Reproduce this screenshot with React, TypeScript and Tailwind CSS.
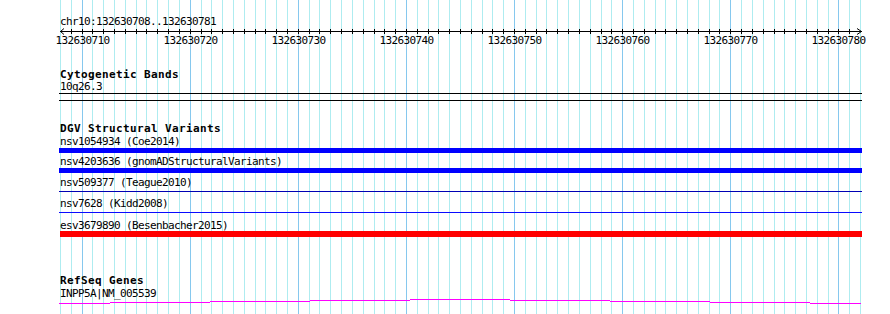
import React from 'react';

const START = 132630708;
const END = 132630781;
const LEFT = 60;
const RIGHT = 860;
const BP = END - START + 1;
const STEP = (RIGHT - LEFT) / BP;

const ticks = Array.from({ length: BP + 1 }, (_, i) => ({
  x: Math.round(LEFT + i * STEP),
  pos: START + i,
}));

const variants: { name: string; kind: 'bar' | 'line' | 'red'; color: string; gap: number }[] = [
  { name: 'nsv1054934 (Coe2014)', kind: 'bar', color: '#0000ff', gap: 2 },
  { name: 'nsv4203636 (gnomADStructuralVariants)', kind: 'bar', color: '#0000ff', gap: 3 },
  { name: 'nsv509377 (Teague2010)', kind: 'line', color: '#0000b4', gap: 5 },
  { name: 'nsv7628 (Kidd2008)', kind: 'line', color: '#0a0aff', gap: 6 },
  { name: 'esv3679890 (Besenbacher2015)', kind: 'red', color: '#ff0000', gap: 0 },
];

// refseq gene line steps (x from, x to, y inside 7px strip)
const geneSegs = [
  [59, 110, 5],
  [110, 210, 4],
  [210, 310, 3],
  [310, 410, 2],
  [410, 510, 1],
  [510, 610, 2],
  [610, 710, 3],
  [710, 810, 4],
  [810, 861, 5],
];

const mono = "font-['DejaVu_Sans_Mono',monospace] text-[11px] leading-[13px] text-black";
const label = `${mono} tracking-[-0.62px] pl-px whitespace-nowrap`;
const heading = `${mono} font-bold tracking-[0.38px] pl-px whitespace-nowrap`;

function Grid() {
  return (
    <svg className="absolute inset-0 pointer-events-none" width={890} height={314}>
      {ticks.map((t) => (
        <line
          key={t.pos}
          x1={t.x + 0.5}
          x2={t.x + 0.5}
          y1={0}
          y2={314}
          stroke={t.pos % 10 === 0 ? '#86c8ee' : '#aeecf0'}
          strokeWidth={1}
        />
      ))}
    </svg>
  );
}

function Ruler() {
  return (
    <svg width={810} height={20} className="block -ml-[59px] w-[890px]" viewBox="0 28 890 20">
      <line x1={60} x2={862} y1={31.5} y2={31.5} stroke="#000" />
      <polyline points="64,28.5 60.5,31.5 64,34.5" fill="none" stroke="#000" />
      <polyline points="857,28.5 861.5,31.5 857,34.5" fill="none" stroke="#000" />
      {ticks.slice(1, -1).map((t) => (
        <line key={t.pos} x1={t.x + 0.5} x2={t.x + 0.5} y1={29} y2={34} stroke="#000" />
      ))}
      {ticks
        .filter((t) => t.pos % 10 === 0)
        .map((t) => (
          <text
            key={t.pos}
            x={t.x + 0.5}
            y={44}
            textAnchor="middle"
            fontFamily="'DejaVu Sans Mono', monospace"
            fontSize={11}
            letterSpacing={-0.62}
            fill="#000"
          >
            {t.pos}
          </text>
        ))}
    </svg>
  );
}

export default function App() {
  return (
    <div className="relative w-[890px] h-[314px] bg-white overflow-hidden">
      <Grid />
      <div className="relative pl-[59px] w-[862px]">
        <div className={`${label} mt-[15px]`}>chr10:132630708..132630781</div>
        <Ruler />

        {/* Cytogenetic Bands */}
        <div className={`${heading} mt-[20px] h-[12px] leading-[12px]`}>Cytogenetic Bands</div>
        <div className={`${label} h-[13px]`}>10q26.3</div>
        <div className="h-[8px] border-y border-black" />

        {/* DGV Structural Variants */}
        <div className={`${heading} mt-[21px] h-[13px]`}>DGV Structural Variants</div>
        {variants.map((v) => (
          <div key={v.name} style={{ marginBottom: v.gap }}>
            <div className={`${label} ${v.kind === 'red' ? 'h-[12px]' : 'h-[13px]'}`}>{v.name}</div>
            {v.kind === 'bar' && <div className="h-[5px]" style={{ background: v.color }} />}
            {v.kind === 'line' && <div className="mt-[2px] h-px" style={{ background: v.color }} />}
            {v.kind === 'red' && <div className="h-[6px] ml-px" style={{ background: v.color }} />}
          </div>
        ))}

        {/* RefSeq Genes */}
        <div className={`${heading} mt-[37px] h-[13px]`}>RefSeq Genes</div>
        <div className={`${label} h-[11px] overflow-visible`}>INPP5A|NM_005539</div>
        <svg width={890} height={7} className="block -ml-[59px]">
          {geneSegs.map(([a, b, y]) => (
            <line key={a} x1={a} x2={b} y1={y + 0.5} y2={y + 0.5} stroke="#ff00ff" />
          ))}
        </svg>
      </div>
    </div>
  );
}
